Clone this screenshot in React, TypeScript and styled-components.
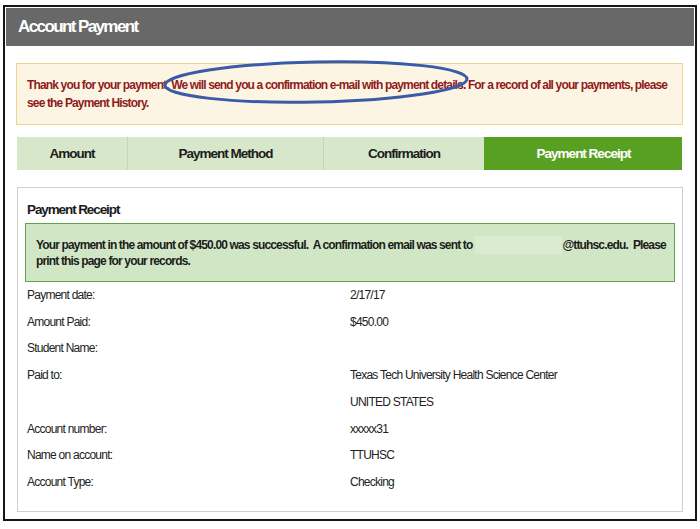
import React from "react";
import styled, { createGlobalStyle } from "styled-components";

const GlobalStyle = createGlobalStyle`
  html, body {
    margin: 0;
    padding: 0;
    background: #ffffff;
  }
  body {
    font-family: "Liberation Sans", Arial, sans-serif;
    color: #222222;
  }
`;

const steps = [
  { label: "Amount", width: 110 },
  { label: "Payment Method", width: 196 },
  { label: "Confirmation", width: 161 },
  { label: "Payment Receipt", width: 198, active: true },
];

const details: { label: string; value: string }[] = [
  { label: "Payment date:", value: "2/17/17" },
  { label: "Amount Paid:", value: "$450.00" },
  { label: "Student Name:", value: "" },
  { label: "Paid to:", value: "Texas Tech University Health Science Center" },
  { label: "", value: "UNITED STATES" },
  { label: "Account number:", value: "xxxxx31" },
  { label: "Name on account:", value: "TTUHSC" },
  { label: "Account Type:", value: "Checking" },
];

const Page = styled.div`
  padding: 5px 3px 4px 3px;
`;

const Frame = styled.div`
  border: 2px solid #151515;
  height: 516px;
  box-sizing: border-box;
  padding: 1px 0 0 0;
`;

const Header = styled.div`
  height: 38px;
  margin: 0 1px;
  background: #686868;
  color: #ffffff;
  font-size: 17px;
  font-weight: 700;
  letter-spacing: -1.6px;
  line-height: 38px;
  padding-left: 12px;
`;

const Content = styled.div`
  padding: 17px 12px 0 11px;
`;

const Notice = styled.div`
  position: relative;
  box-sizing: border-box;
  height: 62px;
  background: #fdf5e4;
  border: 1px solid #ecd68e;
  padding: 12px 8px 12px 10px;
  color: #8e1b1b;
  font-size: 12px;
  font-weight: 700;
  letter-spacing: -0.85px;
  line-height: 18px;
`;

/* hand-drawn highlight around the e-mail sentence */
const Circle = styled.svg`
  position: absolute;
  left: 129px;
  top: -6px;
  overflow: visible;
  pointer-events: none;
`;

const Steps = styled.div`
  display: flex;
  margin: 12px 0 0 1px;
  height: 33px;
`;

const Step = styled.div<{ $active?: boolean; $w: number }>`
  width: ${(p) => p.$w}px;
  box-sizing: border-box;
  display: flex;
  align-items: center;
  justify-content: center;
  background: ${(p) => (p.$active ? "#57a021" : "#d6e8c9")};
  color: ${(p) => (p.$active ? "#ffffff" : "#1c1c1c")};
  border-left: 1px solid ${(p) => (p.$active ? "#57a021" : "#c3d7b4")};
  font-size: 13.5px;
  font-weight: 700;
  letter-spacing: -1px;
  &:first-child {
    border-left: none;
  }
`;

const Panel = styled.div`
  margin: 17px 0 0 1px;
  height: 325px;
  box-sizing: border-box;
  border: 1px solid #cfcfcf;
  padding: 14px 7px 0 7px;
`;

const PanelTitle = styled.div`
  font-size: 13.5px;
  font-weight: 700;
  letter-spacing: -1.1px;
  line-height: 16px;
  padding-left: 2px;
  color: #1a1a1a;
`;

const Success = styled.div`
  margin-top: 5px;
  background: #d1e6c4;
  border: 1px solid #5da44c;
  padding: 12px 4px 12px 10px;
  font-size: 12px;
  font-weight: 700;
  letter-spacing: -0.85px;
  line-height: 15px;
  color: #1c1c1c;
`;

const SuccessLine = styled.div`
  white-space: nowrap;
`;

// blanked-out mailbox name before the domain
const Hidden = styled.span`
  display: inline-block;
  width: 87px;
  height: 18px;
  vertical-align: -5px;
  margin-left: 3px;
  background: #d9ecd2;
`;

const Rows = styled.div`
  display: grid;
  grid-template-columns: 323px 1fr;
  padding-left: 2px;
  font-size: 12px;
  letter-spacing: -0.75px;
  line-height: 26.7px;
  color: #222222;
`;

export default function App() {
  return (
    <Page>
      <GlobalStyle />
      <Frame>
        <Header>Account Payment</Header>
        <Content>
          <Notice>
            Thank you for your payment. We will send you a confirmation e-mail with
            payment details. For a record of all your payments, please see the Payment
            History.
            <Circle width="340" height="48" viewBox="0 0 340 48">
              <ellipse
                cx="170"
                cy="24"
                rx="151"
                ry="20"
                fill="none"
                stroke="#3a5ba8"
                strokeWidth="3"
                transform="rotate(-1.2 170 24)"
              />
            </Circle>
          </Notice>

          <Steps>
            {steps.map((s) => (
              <Step key={s.label} $w={s.width} $active={s.active}>
                {s.label}
              </Step>
            ))}
          </Steps>

          <Panel>
            <PanelTitle>Payment Receipt</PanelTitle>
            <Success>
              <SuccessLine>
                <span>
                  Your payment in the amount of $450.00 was successful.&nbsp; A
                  confirmation email was sent to
                </span>
                <Hidden />
                <span>@ttuhsc.edu.&nbsp; Please</span>
              </SuccessLine>
              <SuccessLine>print this page for your records.</SuccessLine>
            </Success>
            <Rows>
              {details.map((d, i) => (
                <React.Fragment key={i}>
                  <span>{d.label}</span>
                  <span>{d.value}</span>
                </React.Fragment>
              ))}
            </Rows>
          </Panel>
        </Content>
      </Frame>
    </Page>
  );
}
